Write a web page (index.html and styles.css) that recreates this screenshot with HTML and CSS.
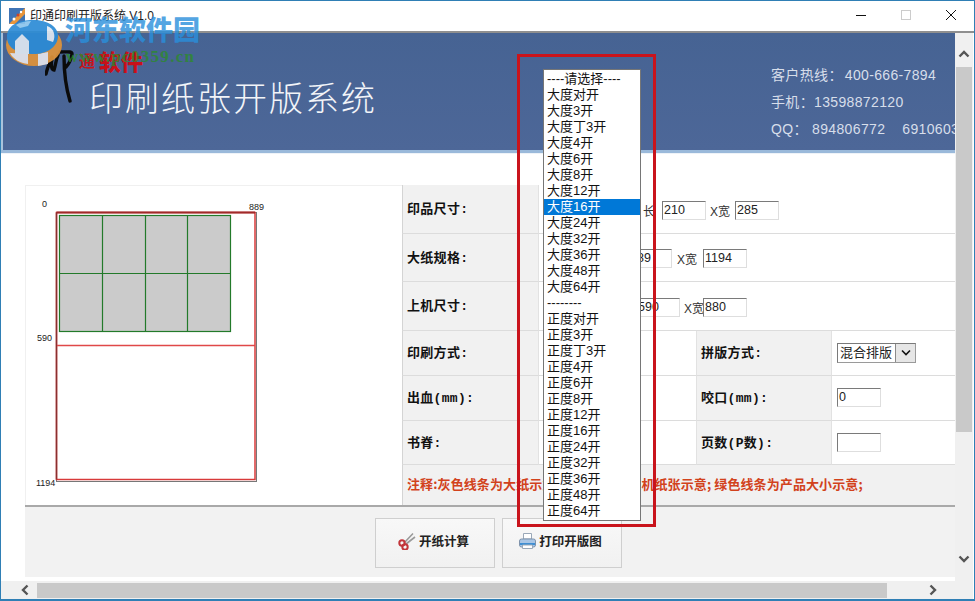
FILE: index.html
```html
<!DOCTYPE html>
<html lang="zh-CN">
<head>
<meta charset="utf-8">
<title>印通印刷开版系统 V1.0</title>
<link rel="stylesheet" href="styles.css">
</head>
<body>
<div class="window">
  <header class="titlebar">
    <svg class="app-icon" width="16" height="16" viewBox="0 0 16 16"><rect width="16" height="16" fill="#3f74b5"/><path d="M0 16 L16 0 V6 L6 16Z" fill="#e8953a"/><circle cx="5" cy="11" r="1.5" fill="#fff"/><circle cx="9" cy="7" r="1.5" fill="#c9442c"/><circle cx="12" cy="4" r="1.2" fill="#fff"/></svg>
    <span class="app-title">印通印刷开版系统 V1.0</span>
    <div class="win-controls">
      <svg width="12" height="12" viewBox="0 0 12 12"><path d="M1 6.500H11" stroke="#111" stroke-width="1"/></svg>
      <svg width="12" height="12" viewBox="0 0 12 12"><rect x="1.500" y="1.500" width="9" height="9" fill="none" stroke="#ccc"/></svg>
      <svg width="12" height="12" viewBox="0 0 12 12"><path d="M1 1L11 11M11 1L1 11" stroke="#111" stroke-width="1"/></svg>
    </div>
  </header>
  <div class="client">
    <main class="content">
      <section class="banner">
        <div class="brand">
          <svg class="brand-mark" width="30" height="54" viewBox="0 0 30 54"><path d="M7 7C4 14 2 19 1 24M7 9C6 14 6 20 9 20C11 14 11 9 13 5M15 2C22 2 27 1 27 4C26 10 23 15 21 17M19 6C19 20 21 38 25 51" fill="none" stroke="#0b0b0b" stroke-width="3.400" stroke-linecap="round"/></svg>
          <span class="brand-seal">通</span>
          <span class="brand-name">软件</span>
        </div>
        <h1 class="banner-title">印刷纸张开版系统</h1>
        <div class="contact">
          <p>客户热线：<span class="contact-num">400-666-7894</span></p>
          <p>手机：13598872120</p>
          <p class="contact-qq">QQ： 894806772&nbsp;&nbsp;&nbsp;&nbsp;691060311</p>
        </div>
      </section>
      <div class="stripe"></div>
      <section class="page">
        <div class="panel">
          <div class="diagram">
            <svg width="377" height="320" viewBox="25 185 377 320">
              <rect x="56.500" y="212.500" width="200" height="269" fill="#fff" stroke="#777"/>
              <rect x="56.500" y="212.500" width="198.500" height="267" fill="#fff" stroke="#d83a3a" stroke-width="1.500"/>
              <path d="M56.500 212.500H255" stroke="#a02a2a" stroke-width="2"/>
              <path d="M56.500 212.500V479.500" stroke="#8a3030" stroke-width="1.500"/>
              <path d="M57 345.500H255" stroke="#e04848" stroke-width="1.400"/>
              <rect x="59.500" y="215.500" width="171" height="116" fill="#cbcbcb" stroke="#237a2a" stroke-width="1.200"/>
              <path d="M102.500 215.500V331.500M145.500 215.500V331.500M187.500 215.500V331.500M59.500 273.500H230.500" stroke="#237a2a" stroke-width="1.200" fill="none"/>
              <text x="42" y="207" class="dim">0</text>
              <text x="249" y="210" class="dim">889</text>
              <text x="37" y="341" class="dim">590</text>
              <text x="36" y="486" class="dim">1194</text>
            </svg>
          </div>
          <div class="form">
            <div class="label">印品尺寸:</div>
            <div class="value wide row-size">
              <span class="hidden-select"></span>
              <span class="unit unit-long">长</span>
              <span class="field field-after-long">210</span>
              <span class="unit unit-x">X宽</span>
              <span class="field">285</span>
            </div>
            <div class="label">大纸规格:</div>
            <div class="value wide row-paper">
              <span class="field">889</span>
              <span class="unit unit-x2">X宽</span>
              <span class="field">1194</span>
            </div>
            <div class="label">上机尺寸:</div>
            <div class="value wide row-press">
              <span class="field">590</span>
              <span class="unit unit-x3">X宽</span>
              <span class="field">880</span>
            </div>
            <div class="label">印刷方式:</div>
            <div class="value"></div>
            <div class="label label-mid">拼版方式:</div>
            <div class="value value-end">
              <span class="combo"><span class="combo-text">混合排版</span><span class="combo-btn"><svg width="10" height="7" viewBox="0 0 10 7"><path d="M1 1.500L5 5.500L9 1.500" fill="none" stroke="#111" stroke-width="1.600"/></svg></span></span>
            </div>
            <div class="label">出血(mm):</div>
            <div class="value"></div>
            <div class="label label-mid">咬口(mm):</div>
            <div class="value value-end"><span class="field">0</span></div>
            <div class="label">书脊:</div>
            <div class="value"></div>
            <div class="label label-mid">页数(P数):</div>
            <div class="value value-end"><span class="field"></span></div>
            <div class="note">注释:灰色线条为大纸示意; 红色线条为上机纸张示意; 绿色线条为产品大小示意;</div>
          </div>
        </div>
        <div class="actions">
          <button class="btn">
            <svg width="18" height="18" viewBox="0 0 18 18"><path d="M6 11L15 1.500M8 12L17 5" stroke="#9a9a9a" stroke-width="1.600" fill="none"/><circle cx="4" cy="11" r="2.700" fill="none" stroke="#c2353a" stroke-width="2"/><circle cx="7" cy="15" r="2.700" fill="none" stroke="#c2353a" stroke-width="2"/></svg>
            <span>开纸计算</span>
          </button>
          <button class="btn">
            <svg width="17" height="18" viewBox="0 0 17 18"><path d="M4.500 1.500H12.500V7H4.500Z" fill="#fff" stroke="#9aa8b8"/><rect x="0.500" y="7" width="16" height="8" rx="2" fill="#a9c6e6" stroke="#7f93ab"/><rect x="1" y="11" width="15" height="2" fill="#3f8fd4"/><path d="M3.500 13H13.500V16.500H3.500Z" fill="#fff" stroke="#9aa8b8"/></svg>
            <span>打印开版图</span>
          </button>
        </div>
      </section>
    </main>
    <aside class="vscroll">
      <svg width="12" height="8" viewBox="0 0 12 8"><path d="M1.500 6.500L6 2L10.500 6.500" fill="none" stroke="#555" stroke-width="2.400"/></svg>
      <div class="vthumb"></div>
      <svg width="12" height="8" viewBox="0 0 12 8"><path d="M1.500 1.500L6 6L10.500 1.500" fill="none" stroke="#555" stroke-width="2.400"/></svg>
    </aside>
  </div>
  <footer class="hscroll">
    <svg width="8" height="12" viewBox="0 0 8 12"><path d="M6.500 1.500L2 6L6.500 10.500" fill="none" stroke="#555" stroke-width="2.400"/></svg>
    <div class="hthumb"></div>
    <svg width="8" height="12" viewBox="0 0 8 12"><path d="M1.500 1.500L6 6L1.500 10.500" fill="none" stroke="#555" stroke-width="2.400"/></svg>
  </footer>

  <div class="watermark">
    <svg class="wm-logo" width="60" height="52" viewBox="0 0 60 52"><ellipse cx="30" cy="28" rx="28" ry="21" fill="#e0933a"/><path d="M6 36C9 42 16 46 24 47V37ZM34 37V49L44 47V35Z" fill="#e6e6ec"/><path d="M3 20C3 8 15 3 29 3C44 3 55 10 54 20C53 31 41 38 27 37C13 36 3 31 3 20Z" fill="#2c8cd6"/><path d="M11 37V24L18 17L25 24V37Z" fill="#dfe8f2"/><path d="M43 9C50 11 52 19 49 25L43 23Z" fill="#dfe8f2"/><path d="M12 8C16 5 22 4 27 4L24 9L16 11Z" fill="#8cc4ec"/></svg>
    <span class="wm-name">河东软件园</span>
    <span class="wm-url">www.pc0359.cn</span>
  </div>

  <ul class="droplist">
    <li>----请选择----</li>
    <li>大度对开</li><li>大度3开</li><li>大度丁3开</li><li>大度4开</li><li>大度6开</li><li>大度8开</li><li>大度12开</li>
    <li class="selected">大度16开</li>
    <li>大度24开</li><li>大度32开</li><li>大度36开</li><li>大度48开</li><li>大度64开</li>
    <li>--------</li>
    <li>正度对开</li><li>正度3开</li><li>正度丁3开</li><li>正度4开</li><li>正度6开</li><li>正度8开</li><li>正度12开</li><li>正度16开</li><li>正度24开</li><li>正度32开</li><li>正度36开</li><li>正度48开</li><li>正度64开</li>
  </ul>
  <div class="callout"></div>
</div>
</body>
</html>
```

FILE: styles.css
```css
* { box-sizing: border-box; }
html, body { margin: 0; padding: 0; }
body {
  width: 975px;
  height: 601px;
  overflow: hidden;
  background: #fff;
  font-family: "Liberation Sans", "Noto Sans CJK SC", sans-serif;
  color: #111;
}
.window {
  position: relative;
  width: 975px;
  height: 601px;
  display: flex;
  flex-direction: column;
  border: 1px solid #2f7fb5;
  border-bottom-width: 2px;
  background: #fff;
  overflow: hidden;
}

/* title bar */
.titlebar {
  height: 30px;
  flex: none;
  display: flex;
  align-items: center;
  padding-left: 8px;
  background: #fff;
}
.app-icon { margin-top: -1px; }
.app-title { margin-left: 5px; font-size: 12px; line-height: 16px; color: #222; }
.win-controls {
  margin-left: auto;
  display: flex;
  gap: 33px;
  padding-right: 17px;
  margin-top: -2px;
}

/* client */
.client {
  flex: 1;
  min-height: 0;
  display: flex;
  border-top: 2px solid #8f8f8f;
}
.content { width: 954px; flex: none; overflow: hidden; display: flex; flex-direction: column; }

.banner {
  height: 117px;
  flex: none;
  margin-left: 2px;
  padding-left: 43px;
  position: relative;
  display: flex;
  background: linear-gradient(#466393, #4d6798);
  box-shadow: -2px 0 0 #a9c3dc;
  overflow: hidden;
}
.brand { position: absolute; left: 42px; top: 17px; display: flex; align-items: flex-start; }
.brand-mark { flex: none; }
.brand-seal {
  margin-left: 3px;
  margin-top: 3px;
  width: 18px;
  height: 18px;
  font-size: 16px;
  line-height: 18px;
  text-align: center;
  font-weight: 700;
  color: #c4161c;
}
.brand-name {
  margin-left: 3px;
  font-size: 22px;
  line-height: 26px;
  font-weight: 900;
  color: #c8101a;
}
.banner-title {
  margin: 43px 0 0 43px;
  font-size: 34px;
  line-height: 46px;
  height: 46px;
  letter-spacing: 2px;
  font-weight: 300;
  color: #f2f4f8;
  white-space: nowrap;
}
.contact {
  position: absolute;
  left: 768px;
  top: 29px;
  width: 190px;
  color: #d7deea;
  font-size: 14px;
  line-height: 27px;
  letter-spacing: 0.350px;
  white-space: nowrap;
}
.contact p { margin: 0; }
.contact-num { margin-left: 2px; }
.stripe { height: 4px; flex: none; margin-left: 0; background: linear-gradient(#9ab9da 75%, #eef3f8 75%); }

/* page */
.page { flex: 1; padding: 31px 0 0 24px; display: flex; flex-direction: column; min-height: 0; background: #fff; }
.panel {
  flex: none;
  width: 930px;
  height: 320px;
  display: flex;
}
.diagram { width: 377px; flex: none; border-top: 1px solid #f0f0f0; border-left: 1px solid #f0f0f0; }
.diagram svg { display: block; margin: -1px 0 0 -1px; }
.dim { font-family: "Liberation Sans", sans-serif; font-size: 9px; fill: #222; }

.form {
  width: 553px;
  flex: none;
  display: grid;
  grid-template-columns: 137px 157px 136px 123px;
  grid-template-rows: 49px 48px 49px 45px 45px 44px 40px;
}
.label {
  display: flex;
  align-items: center;
  padding: 0 0 3px 4px;
  background: #f1f1f1;
  border-bottom: 1px solid #dcdcdc;
  border-left: 1px solid #d4d4d4;
  border-right: 1px solid #e2e2e2;
  font-size: 13px;
  letter-spacing: 0.300px;
  font-weight: 700;
  font-family: "Liberation Mono", "Noto Sans CJK SC", sans-serif;
  white-space: nowrap;
}
.label-mid { border-left-color: #e2e2e2; }
.value {
  display: flex;
  align-items: center;
  background: #fff;
  border-bottom: 1px solid #dcdcdc;
  font-size: 12px;
}
.wide { grid-column: span 3; padding-top: 2px; }
.value-end { padding-left: 5px; padding-bottom: 1px; }
.row-size { padding-left: 1px; }
.row-paper { padding-left: 89px; }
.row-press { padding-left: 97px; padding-top: 3px; }
.hidden-select { width: 99px; height: 20px; flex: none; }
.unit { color: #333; font-size: 12px; white-space: nowrap; }
.unit-long { margin-left: 4px; }
.field-after-long { margin-left: 7px; }
.unit-x { margin: 0 5px 0 4px; }
.unit-x2 { margin: 0 6px 0 5px; }
.unit-x3 { margin: 0 -1px 0 4px; }
.field {
  width: 44px;
  height: 19px;
  flex: none;
  padding-left: 1px;
  border: 1px solid;
  border-color: #7a7a7a #dedede #dedede #7a7a7a;
  background: #fff;
  font-size: 12.500px;
  line-height: 17px;
  color: #222;
}
.combo {
  width: 79px;
  height: 20px;
  display: flex;
  border: 1px solid;
  border-color: #7a7a7a #9a9a9a #9a9a9a #7a7a7a;
  font-size: 13px;
  line-height: 18px;
}
.combo-text { flex: 1; padding-left: 2px; white-space: nowrap; overflow: hidden; color: #222; }
.combo-btn {
  width: 20px;
  flex: none;
  display: flex;
  align-items: center;
  justify-content: center;
  background: #e6e6e6;
  border-left: 1px solid #8a8a8a;
}
.note {
  grid-column: 1 / -1;
  display: flex;
  align-items: center;
  padding: 0 0 3px 4px;
  background: #f1f1f1;
  border-left: 1px solid #d4d4d4;
  color: #d2421c;
  font-size: 13px;
  letter-spacing: 0.100px;
  font-weight: 700;
  font-family: "Noto Sans CJK SC", sans-serif;
  white-space: nowrap;
}

/* action bar */
.actions {
  flex: 1;
  display: flex;
  justify-content: flex-start;
  gap: 7px;
  padding: 11px 0 0 350px;
  background: #f2f2f2;
  border-top: 2px solid #a9a9a9;
  margin-bottom: 4px;
}
.btn {
  width: 120px;
  height: 50px;
  display: flex;
  align-items: center;
  justify-content: center;
  gap: 3px;
  padding: 0 3px 5px 0;
  border: 1px solid #cfcfcf;
  background: linear-gradient(#f8f8f8, #f1f1f1);
  font-family: "Noto Sans CJK SC", sans-serif;
  font-size: 12.500px;
  font-weight: 700;
  color: #222;
}

/* scrollbars */
.vscroll {
  width: 18px;
  flex: none;
  display: flex;
  flex-direction: column;
  align-items: center;
  padding-top: 17px;
  background: #f0f0f0;
}
.vthumb { width: 16px; height: 365px; margin-top: 9px; margin-bottom: 123px; background: #c9c9c9; }
.hscroll {
  height: 18px;
  flex: none;
  display: flex;
  align-items: center;
  padding-left: 20px;
  background: #f0f0f0;
  margin-right: 1px;
}
.hthumb { width: 850px; height: 15px; margin: 0 42px 0 8px; background: #c9c9c9; }

/* overlays */
.watermark { position: absolute; left: 0; top: 0; width: 210px; height: 70px; pointer-events: none; }
.wm-logo { position: absolute; left: 3px; top: 16px; opacity: 0.92; }
.wm-name {
  position: absolute;
  left: 64px;
  top: 11px;
  font-size: 27px;
  line-height: 34px;
  font-weight: 900;
  font-family: "Noto Sans CJK SC", sans-serif;
  color: #2a8fdc;
  opacity: 0.8;
  white-space: nowrap;
}
.wm-url {
  position: absolute;
  left: 65px;
  top: 46px;
  font-family: "Liberation Serif", serif;
  font-size: 17px;
  line-height: 20px;
  font-weight: 700;
  letter-spacing: 1.300px;
  color: #2d8a2d;
  opacity: 0.8;
  white-space: nowrap;
}
.droplist {
  position: absolute;
  left: 542px;
  top: 68px;
  width: 98px;
  height: 452px;
  margin: 0;
  padding: 1px 0;
  list-style: none;
  background: #fff;
  border: 1px solid #767676;
  font-size: 13px;
  line-height: 16px;
  color: #111;
}
.droplist li { height: 16px; padding-left: 3px; white-space: nowrap; }
.droplist .selected { background: #0078d7; color: #fff; }
.callout {
  position: absolute;
  left: 516px;
  top: 53px;
  width: 139px;
  height: 473px;
  border: 3px solid #c9141c;
  pointer-events: none;
}
```
